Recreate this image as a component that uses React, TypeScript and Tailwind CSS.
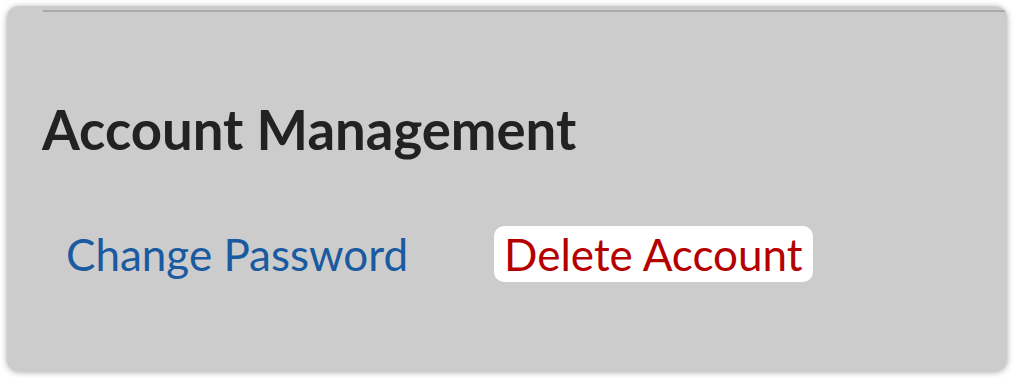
import React from "react";

export default function App() {
  return (
    <div className="w-[1015px] h-[379px] bg-white pt-[6px] pl-[7px]" style={{ fontFamily: "Lato, 'Noto Sans', sans-serif" }}>
      <div className="w-[1000px] h-[365px] rounded-[12px] bg-[#cccccc] overflow-hidden shadow-[0_1px_6px_rgba(0,0,0,0.35)] flex flex-col">
        <div className="ml-[36px] mt-[4px] h-[2px] bg-[#aaaaaa]" />
        <h2 className="mt-[87px] ml-[35px] text-[54.5px] leading-[60px] font-bold text-[#222222]">Account Management</h2>
        <div className="mt-[67px] ml-[42px] flex items-center gap-[69px]">
          <a className="text-[44px] leading-[56px] text-[#1a5aa0] px-[17px]">Change Password</a>
          <a className="text-[44px] leading-[56px] text-[#b50000] bg-white rounded-[10px] px-[10px]">Delete Account</a>
        </div>
      </div>
    </div>
  );
}
